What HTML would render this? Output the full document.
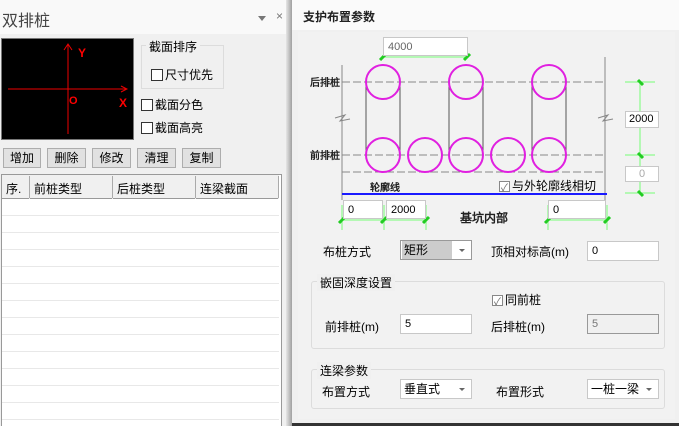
<!DOCTYPE html>
<html><head><meta charset="utf-8"><style>
*{margin:0;padding:0;box-sizing:border-box}
body{width:679px;height:426px;overflow:hidden;background:#f0f0f0;font-family:"Liberation Sans","Noto Sans CJK SC",sans-serif;font-size:12px;color:#000;position:relative}
.a{position:absolute;white-space:nowrap}
.btn{position:absolute;top:148px;height:20px;background:#e1e1e1;border:1px solid #adadad;text-align:center;line-height:18px;font-size:12px}
.cb{display:inline-block;width:12px;height:12px;border:1px solid #333;background:#fff;vertical-align:-2px;margin-right:2px}
.inp{position:absolute;height:20px;background:#fff;border:1px solid #c8c8c8;padding-left:4px;line-height:18px;font-size:11px}
.sel{position:absolute;height:20px;background:#fff;border:1px solid #c8c8c8;padding-left:3px;line-height:18px;font-size:12px}
.sel:after{content:"";position:absolute;right:6px;top:8px;border:3px solid transparent;border-top:3px solid #666}
.grp{position:absolute;border:1px solid #dcdcdc;border-radius:3px}
.leg{position:absolute;background:#f0f0f0;padding:0 3px;font-size:12px}
</style></head><body>
<!-- left panel -->
<div class="a" style="left:0;top:0;width:289px;height:34px;background:#f9f9f9"></div>
<div class="a" style="left:2px;top:7px;font-size:16px;color:#444">双排桩</div>
<div class="a" style="left:258px;top:16px;border:4px solid transparent;border-top:5px solid #777"></div>
<div class="a" style="left:276px;top:9px;font-size:12px;color:#777">×</div>
<div class="a" style="left:1px;top:38px;width:133px;height:102px;background:#000;border:1px solid #777"></div>
<svg class="a" style="left:0;top:0" width="140" height="140">
<line x1="68" y1="44" x2="68" y2="134" stroke="#e00" stroke-width="1"/>
<line x1="8" y1="89" x2="127" y2="89" stroke="#e00"/>
<polyline points="64,50 68,44 72,50" fill="none" stroke="#e00"/>
<polyline points="121,86 127,89 121,92" fill="none" stroke="#e00"/>
<text x="78" y="57" fill="#f00" font-size="12" font-weight="bold" font-family="Liberation Sans">Y</text>
<text x="69" y="104" fill="#f00" font-size="11" font-weight="bold" font-family="Liberation Sans">O</text>
<text x="119" y="107" fill="#f00" font-size="12" font-weight="bold" font-family="Liberation Sans">X</text>
</svg>
<div class="grp" style="left:141px;top:45px;width:83px;height:44px;border-radius:0"></div>
<div class="leg" style="left:146px;top:38px">截面排序</div>
<div class="a" style="left:151px;top:66px"><span class="cb"></span>尺寸优先</div>
<div class="a" style="left:141px;top:96px"><span class="cb"></span>截面分色</div>
<div class="a" style="left:141px;top:119px"><span class="cb"></span>截面高亮</div>
<div class="btn" style="left:3px;width:38px">增加</div>
<div class="btn" style="left:47px;width:39px">删除</div>
<div class="btn" style="left:92px;width:39px">修改</div>
<div class="btn" style="left:137px;width:39px">清理</div>
<div class="btn" style="left:182px;width:39px">复制</div>
<div class="a" style="left:1px;top:174px;width:281px;height:252px;background:#fff;border:1px solid #999;border-bottom:none"></div>
<div class="a" style="left:2px;top:175px;width:277px;height:24px;background:#f0f0f0;border-bottom:1px solid #999"></div>
<div class="a" style="left:29px;top:176px;width:1px;height:250px;background:#e8e8e8"></div>
<div class="a" style="left:112px;top:176px;width:1px;height:250px;background:#e8e8e8"></div>
<div class="a" style="left:195px;top:176px;width:1px;height:250px;background:#e8e8e8"></div>
<div class="a" style="left:278px;top:176px;width:1px;height:250px;background:#e8e8e8"></div>
<div class="a" style="left:29px;top:176px;width:1px;height:22px;background:#aaa"></div>
<div class="a" style="left:112px;top:176px;width:1px;height:22px;background:#aaa"></div>
<div class="a" style="left:195px;top:176px;width:1px;height:22px;background:#aaa"></div>
<div class="a" style="left:278px;top:176px;width:1px;height:22px;background:#aaa"></div>
<div class="a" style="left:6px;top:180px">序.</div>
<div class="a" style="left:34px;top:180px">前桩类型</div>
<div class="a" style="left:117px;top:180px">后桩类型</div>
<div class="a" style="left:200px;top:180px">连梁截面</div>
<div class="a" style="left:2px;top:199px;width:277px;height:227px;background:repeating-linear-gradient(#fff 0,#fff 16px,#e8e8e8 16px,#e8e8e8 17px)"></div>
<div class="a" style="left:2px;top:176px;width:1px;height:250px"></div>
<!-- dialog -->
<div class="a" style="left:286px;top:0;width:6px;height:426px;background:linear-gradient(90deg,#e6e6e6,#a0a0a0)"></div>
<div class="a" style="left:292px;top:0;width:387px;height:30px;background:#fafafa"></div>
<div class="a" style="left:303px;top:8px;font-size:12px;font-weight:bold;color:#222">支护布置参数</div>
<div class="a" style="left:292px;top:30px;width:387px;height:393px;background:#f0f0f0"></div>
<div class="a" style="left:298px;top:32px;width:377px;height:387px;background:#f2f2f2"></div>
<div class="a" style="left:292px;top:423px;width:387px;height:3px;background:#333"></div>
<svg class="a" style="left:290px;top:0" width="389" height="230" font-family="Liberation Sans">
<g stroke="#888" stroke-width="1" fill="none">
<line x1="52" y1="65" x2="52" y2="200"/><line x1="315" y1="57" x2="315" y2="200"/>
<line x1="52" y1="82" x2="315" y2="82" stroke-dasharray="8,3"/>
<line x1="52" y1="155" x2="315" y2="155" stroke-dasharray="8,3"/>
<line x1="52" y1="172" x2="315" y2="172" stroke-dasharray="8,3"/>
<polyline points="45,118 55,115 50,121 60,119"/><polyline points="308,118 318,115 313,121 323,119"/>
</g>
<g stroke="#555" stroke-width="1">
<line x1="76" y1="82" x2="76" y2="155"/><line x1="110" y1="82" x2="110" y2="155"/>
<line x1="159" y1="82" x2="159" y2="155"/><line x1="193" y1="82" x2="193" y2="155"/>
<line x1="242" y1="82" x2="242" y2="155"/><line x1="276" y1="82" x2="276" y2="155"/>
</g>
<g stroke="#e020e0" stroke-width="2" fill="none">
<circle cx="93" cy="82" r="17"/><circle cx="176" cy="82" r="17"/><circle cx="259" cy="82" r="17"/>
<circle cx="93" cy="155" r="17"/><circle cx="135" cy="155" r="17"/><circle cx="176" cy="155" r="17"/><circle cx="218" cy="155" r="17"/><circle cx="259" cy="155" r="17"/>
</g>
<line x1="52" y1="194" x2="317" y2="194" stroke="#1a1aff" stroke-width="2"/>
<g stroke="#7f7" stroke-width="1">
<line x1="93" y1="57" x2="177" y2="57"/><line x1="350" y1="82" x2="350" y2="193"/>
<line x1="335" y1="82" x2="365" y2="82"/><line x1="335" y1="155" x2="365" y2="155"/><line x1="335" y1="193" x2="365" y2="193"/>
<line x1="52" y1="220" x2="136" y2="220"/><line x1="258" y1="220" x2="317" y2="220"/>
<line x1="52" y1="205" x2="52" y2="230"/><line x1="94" y1="205" x2="94" y2="230"/><line x1="136" y1="205" x2="136" y2="230"/>
<line x1="258" y1="205" x2="258" y2="230"/><line x1="317" y1="205" x2="317" y2="230"/>
</g>
<g stroke="#2c2" stroke-width="3">
<line x1="90" y1="60" x2="96" y2="54"/><line x1="174" y1="60" x2="180" y2="54"/>
<line x1="348" y1="80" x2="353" y2="85"/><line x1="348" y1="153" x2="353" y2="158"/><line x1="348" y1="191" x2="353" y2="196"/>
<line x1="49" y1="223" x2="55" y2="217"/><line x1="91" y1="223" x2="97" y2="217"/><line x1="133" y1="223" x2="139" y2="217"/>
<line x1="255" y1="223" x2="261" y2="217"/><line x1="314" y1="223" x2="320" y2="217"/>
</g>
<text x="20" y="86" font-size="10" font-weight="bold" fill="#222">后排桩</text>
<text x="20" y="159" font-size="10" font-weight="bold" fill="#222">前排桩</text>
<text x="80" y="191" font-size="10" font-weight="bold" fill="#222">轮廓线</text>
<text x="170" y="222" font-size="12" font-weight="bold" fill="#222">基坑内部</text>
</svg>
<div class="inp" style="left:383px;top:37px;width:85px;height:19px;color:#666;font-size:11px">4000</div>
<div class="inp" style="left:625px;top:111px;width:34px;height:17px;line-height:15px;font-size:11px;padding-left:3px">2000</div>
<div class="inp" style="left:625px;top:166px;width:34px;height:16px;color:#aaa;text-align:center;padding:0;line-height:14px">0</div>
<div class="inp" style="left:343px;top:200px;width:40px;height:19px;font-size:11px">0</div>
<div class="inp" style="left:386px;top:200px;width:40px;height:19px;font-size:11px">2000</div>
<div class="inp" style="left:548px;top:200px;width:58px;height:19px;font-size:11px">0</div>
<div class="a" style="left:499px;top:177px"><span class="cb" style="border-color:#888;width:11px;height:11px;position:relative"><span style="position:absolute;left:1px;top:-3px;font-size:10px;color:#666">✓</span></span>与外轮廓线相切</div>
<div class="a" style="left:323px;top:243px">布桩方式</div>
<div class="sel" style="left:400px;top:240px;width:72px;border-color:#999"><span style="display:inline-block;width:50px;background:#ccc;margin-left:-2px;padding-left:2px">矩形</span></div>
<div class="a" style="left:491px;top:243px">顶相对标高(m)</div>
<div class="inp" style="left:587px;top:241px;width:72px">0</div>
<div class="grp" style="left:311px;top:281px;width:354px;height:68px"></div>
<div class="leg" style="left:317px;top:274px">嵌固深度设置</div>
<div class="a" style="left:492px;top:291px"><span class="cb" style="border-color:#888;width:11px;height:11px;position:relative"><span style="position:absolute;left:1px;top:-3px;font-size:10px;color:#666">✓</span></span>同前桩</div>
<div class="a" style="left:325px;top:318px">前排桩(m)</div>
<div class="inp" style="left:400px;top:314px;width:72px">5</div>
<div class="a" style="left:491px;top:318px">后排桩(m)</div>
<div class="inp" style="left:587px;top:314px;width:72px;background:#f0f0f0;border-color:#999;color:#777">5</div>
<div class="grp" style="left:311px;top:369px;width:354px;height:40px"></div>
<div class="leg" style="left:317px;top:362px">连梁参数</div>
<div class="a" style="left:322px;top:383px">布置方式</div>
<div class="sel" style="left:400px;top:379px;width:72px">垂直式</div>
<div class="a" style="left:496px;top:383px">布置形式</div>
<div class="sel" style="left:587px;top:379px;width:72px">一桩一梁</div>
</body></html>
